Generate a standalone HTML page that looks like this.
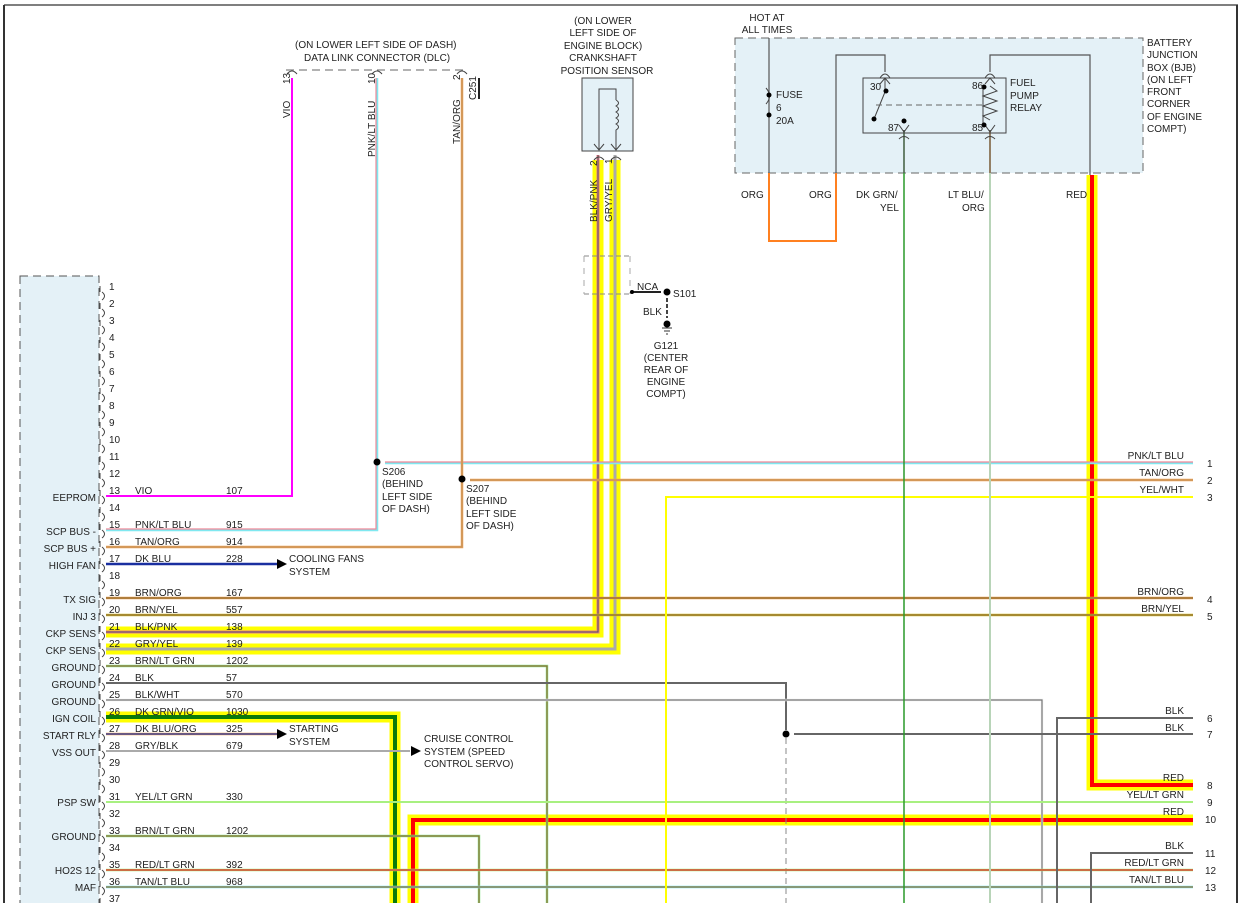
<!DOCTYPE html>
<html><head><meta charset="utf-8"><style>
html,body{margin:0;padding:0;background:#fff}
svg{display:block}
text{font-family:"Liberation Sans",Arial,sans-serif;font-size:10px;fill:#222}
</style></head><body>
<svg width="1242" height="903" viewBox="0 0 1242 903" xmlns="http://www.w3.org/2000/svg">
<rect x="0" y="0" width="1242" height="903" fill="#fff"/>
<line x1="4" y1="5" x2="1238" y2="5" stroke="#555" stroke-width="1.5"/>
<line x1="4" y1="5" x2="4" y2="903" stroke="#333" stroke-width="2"/>
<line x1="1237" y1="5" x2="1237" y2="903" stroke="#333" stroke-width="2"/>

<rect x="20" y="276" width="79" height="640" fill="#e4f1f7" stroke="#555" stroke-dasharray="8,5"/>
<rect x="735" y="38" width="408" height="135" fill="#e4f1f7" stroke="#666" stroke-dasharray="8,5"/>
<rect x="582" y="78" width="51" height="73" fill="#e4f1f7" stroke="#444"/>

<g fill="none" stroke-linejoin="miter">
<g stroke="#ffff00" stroke-width="11">
<path d="M106 632 H598 V160"/>
<path d="M106 649 H615 V160"/>
<path d="M106 717 H395 V903"/>
<path d="M413 903 V820 H1193"/>
<path d="M1092 175 V785 H1193"/>
</g>
<path d="M106 632 H598 V155" stroke="#e9798a" stroke-width="3"/>
<path d="M106 632 H598 V155" stroke="#555" stroke-width="1"/>
<path d="M106 649 H615 V155" stroke="#aaa" stroke-width="3"/>
<path d="M106 717 H395 V903" stroke="#0a7a0a" stroke-width="4"/>
<path d="M413 903 V820 H1193" stroke="#ff0000" stroke-width="4"/>
<path d="M1092 175 V785 H1193" stroke="#ff0000" stroke-width="4"/>

<path d="M106 496 H292 V78" stroke="#ff00ff" stroke-width="2"/>
<path d="M106 530 H377 V78" stroke="#7fe8f0" stroke-width="2.5"/>
<path d="M106 529 H376 V78" stroke="#f08898" stroke-width="1.2"/>
<path d="M385 463 H1193" stroke="#7fe8f0" stroke-width="2.5"/>
<path d="M385 462 H1193" stroke="#f08898" stroke-width="1.2"/>
<path d="M106 547 H462 V78" stroke="#f0a050" stroke-width="2.5"/>
<path d="M106 547 H462 V78" stroke="#b89060" stroke-width="1"/>
<path d="M470 480 H1193" stroke="#f0a050" stroke-width="2.5"/>
<path d="M470 480 H1193" stroke="#b89060" stroke-width="1"/>
<path d="M106 564 H278" stroke="#1a2fa0" stroke-width="2.5"/>
<path d="M106 598 H1193" stroke="#f0a050" stroke-width="2.5"/>
<path d="M106 598 H1193" stroke="#8a6a30" stroke-width="1.3"/>
<path d="M106 615 H1193" stroke="#d4c030" stroke-width="2.5"/>
<path d="M106 615 H1193" stroke="#8a6a30" stroke-width="1.3"/>
<path d="M106 666 H547 V903" stroke="#90e890" stroke-width="2.5"/>
<path d="M106 666 H547 V903" stroke="#8a6a30" stroke-width="1.2"/>
<path d="M106 683 H786 V730" stroke="#666" stroke-width="2"/>
<path d="M786 738 V903" stroke="#888" stroke-width="1" stroke-dasharray="6,4"/>
<path d="M106 700 H1042 V903" stroke="#f0f0f0" stroke-width="2.5"/>
<path d="M106 700 H1042 V903" stroke="#777" stroke-width="1.2"/>
<path d="M106 734 H278" stroke="#f0a050" stroke-width="2.5"/>
<path d="M106 734 H278" stroke="#1a2fa0" stroke-width="1.3"/>
<path d="M106 751 H410" stroke="#aaa" stroke-width="2"/>
<path d="M106 802 H1193" stroke="#a8f080" stroke-width="2"/>
<path d="M106 836 H479 V903" stroke="#90e890" stroke-width="2.5"/>
<path d="M106 836 H479 V903" stroke="#8a6a30" stroke-width="1.2"/>
<path d="M106 870 H1193" stroke="#a8f080" stroke-width="2.5"/>
<path d="M106 870 H1193" stroke="#e02020" stroke-width="1.2"/>
<path d="M106 887 H1193" stroke="#7fe8f0" stroke-width="2.5"/>
<path d="M106 887 H1193" stroke="#8a6a30" stroke-width="1.2"/>
<path d="M666 903 V497 H1193" stroke="#ffff00" stroke-width="2"/>
<path d="M1057 903 V718 H1193" stroke="#666" stroke-width="2"/>
<path d="M794 734 H1193" stroke="#666" stroke-width="2"/>
<path d="M1091 903 V853 H1193" stroke="#666" stroke-width="2"/>
<path d="M904 130 V903" stroke="#2a9a2a" stroke-width="1.5"/>
<path d="M990 130 V903" stroke="#f0c080" stroke-width="2"/>
<path d="M990 173 V903" stroke="#7fe8f0" stroke-width="1"/>
<path d="M769 173 V241 H836 V173" stroke="#ff8020" stroke-width="2"/>

<path d="M769 38 V173" stroke="#555" stroke-width="1.2"/>
<path d="M836 173 V55 H885 V72" stroke="#555" stroke-width="1.2"/>
<path d="M990 72 V55 H1090 V175" stroke="#555" stroke-width="1.2"/>
<path d="M990 130 V173 M904 130 V173" stroke="#555" stroke-width="1.2"/>
<rect x="863" y="78" width="143" height="55" stroke="#444" stroke-width="1"/>
<path d="M885 78 V92 L874 119" stroke="#444" stroke-width="1"/>
<path d="M876 105 H985" stroke="#666" stroke-dasharray="6,4"/>
<path d="M983 85 V126" stroke="#444"/>
<path d="M990 86 L997 91 L983 96 L997 101 L983 106 L997 111 L983 116 L990 120" stroke="#444"/>
<path d="M880 84 L885 78 L890 84 M899 125 L904 132 L909 125 M985 84 L990 78 L995 84 M985 125 L990 132 L995 125" stroke="#444"/>
<path d="M880 78 Q885 70 890 78 M985 78 Q990 70 995 78 M899 139 Q904 134 909 139 M985 139 Q990 134 995 139" stroke="#444"/>
<path d="M766 88 Q773 96 766 104" stroke="#444"/>

<path d="M599 150 V89 H616 V100" stroke="#444"/>
<path d="M616 100 q5 3 0 6 q5 3 0 6 q5 3 0 6 q5 3 0 6 q5 3 0 6 V150" stroke="#444"/>
<path d="M594 144 L599 150 L604 144 M611 144 L616 150 L621 144" stroke="#444"/>
<path d="M594 160 Q599 154 604 160 M611 160 Q616 154 621 160" stroke="#444"/>

<path d="M286 70 H468" stroke="#666" stroke-dasharray="8,5"/>
<path d="M287 74 Q292 68 297 74 M372 74 Q377 68 382 74 M457 74 Q462 68 467 74" stroke="#444"/>
<line x1="479" y1="78" x2="479" y2="99" stroke="#222" stroke-width="2"/>

<path d="M584 256 H630 M584 294 H630" stroke="#888" stroke-dasharray="5,3"/>
<path d="M584 256 V294 M630 256 V294" stroke="#aaa" stroke-dasharray="6,6"/>
<path d="M632 292 H661" stroke="#222" stroke-width="2"/>
<path d="M667 298 V318" stroke="#444" stroke-width="2" stroke-dasharray="4,2"/>
<path d="M662 328 H672 M664 331 H670 M666 334 H668" stroke="#333"/>
</g>

<g fill="#000">
<circle cx="377" cy="462" r="3.5"/><circle cx="462" cy="479" r="3.5"/>
<circle cx="786" cy="734" r="3.5"/><circle cx="667" cy="292" r="3.5"/>
<circle cx="667" cy="324" r="3.5"/><circle cx="632" cy="292" r="2"/>
<circle cx="769" cy="95" r="2.5"/><circle cx="769" cy="115" r="2.5"/>
<circle cx="886" cy="91" r="2.5"/><circle cx="874" cy="119" r="2.5"/>
<circle cx="904" cy="121" r="2.5"/><circle cx="984" cy="87" r="2.5"/><circle cx="984" cy="125" r="2.5"/>
<path d="M277 559 L287 564 L277 569 Z"/>
<path d="M277 729 L287 734 L277 739 Z"/>
<path d="M411 746 L421 751 L411 756 Z"/>
</g>

<g fill="none" stroke="#444" stroke-width="1">
<path d="M100 286 v6 M102 292 q5 4 0 8 M100 303 v6 M102 309 q5 4 0 8 M100 320 v6 M102 326 q5 4 0 8 M100 337 v6 M102 343 q5 4 0 8 M100 354 v6 M102 360 q5 4 0 8 M100 371 v6 M102 377 q5 4 0 8 M100 388 v6 M102 394 q5 4 0 8 M100 405 v6 M102 411 q5 4 0 8 M100 422 v6 M102 428 q5 4 0 8 M100 439 v6 M102 445 q5 4 0 8 M100 456 v6 M102 462 q5 4 0 8 M100 473 v6 M102 479 q5 4 0 8 M100 490 v6 M102 496 q5 4 0 8 M100 507 v6 M102 513 q5 4 0 8 M100 524 v6 M102 530 q5 4 0 8 M100 541 v6 M102 547 q5 4 0 8 M100 558 v6 M102 564 q5 4 0 8 M100 575 v6 M102 581 q5 4 0 8 M100 592 v6 M102 598 q5 4 0 8 M100 609 v6 M102 615 q5 4 0 8 M100 626 v6 M102 632 q5 4 0 8 M100 643 v6 M102 649 q5 4 0 8 M100 660 v6 M102 666 q5 4 0 8 M100 677 v6 M102 683 q5 4 0 8 M100 694 v6 M102 700 q5 4 0 8 M100 711 v6 M102 717 q5 4 0 8 M100 728 v6 M102 734 q5 4 0 8 M100 745 v6 M102 751 q5 4 0 8 M100 762 v6 M102 768 q5 4 0 8 M100 779 v6 M102 785 q5 4 0 8 M100 796 v6 M102 802 q5 4 0 8 M100 813 v6 M102 819 q5 4 0 8 M100 830 v6 M102 836 q5 4 0 8 M100 847 v6 M102 853 q5 4 0 8 M100 864 v6 M102 870 q5 4 0 8 M100 881 v6 M102 887 q5 4 0 8 M100 898 v6"/>
</g>
<g font-size="9.5">
<text x="109" y="290">1</text><text x="109" y="307">2</text><text x="109" y="324">3</text><text x="109" y="341">4</text><text x="109" y="358">5</text><text x="109" y="375">6</text><text x="109" y="392">7</text><text x="109" y="409">8</text><text x="109" y="426">9</text><text x="109" y="443">10</text><text x="109" y="460">11</text><text x="109" y="477">12</text><text x="109" y="494">13</text><text x="109" y="511">14</text><text x="109" y="528">15</text><text x="109" y="545">16</text><text x="109" y="562">17</text><text x="109" y="579">18</text><text x="109" y="596">19</text><text x="109" y="613">20</text><text x="109" y="630">21</text><text x="109" y="647">22</text><text x="109" y="664">23</text><text x="109" y="681">24</text><text x="109" y="698">25</text><text x="109" y="715">26</text><text x="109" y="732">27</text><text x="109" y="749">28</text><text x="109" y="766">29</text><text x="109" y="783">30</text><text x="109" y="800">31</text><text x="109" y="817">32</text><text x="109" y="834">33</text><text x="109" y="851">34</text><text x="109" y="868">35</text><text x="109" y="885">36</text><text x="109" y="902">37</text>
</g>
<g font-size="9.5">
<text x="135" y="494">VIO</text><text x="226" y="494">107</text>
<text x="135" y="528">PNK/LT BLU</text><text x="226" y="528">915</text>
<text x="135" y="545">TAN/ORG</text><text x="226" y="545">914</text>
<text x="135" y="562">DK BLU</text><text x="226" y="562">228</text>
<text x="135" y="596">BRN/ORG</text><text x="226" y="596">167</text>
<text x="135" y="613">BRN/YEL</text><text x="226" y="613">557</text>
<text x="135" y="630">BLK/PNK</text><text x="226" y="630">138</text>
<text x="135" y="647">GRY/YEL</text><text x="226" y="647">139</text>
<text x="135" y="664">BRN/LT GRN</text><text x="226" y="664">1202</text>
<text x="135" y="681">BLK</text><text x="226" y="681">57</text>
<text x="135" y="698">BLK/WHT</text><text x="226" y="698">570</text>
<text x="135" y="715">DK GRN/VIO</text><text x="226" y="715">1030</text>
<text x="135" y="732">DK BLU/ORG</text><text x="226" y="732">325</text>
<text x="135" y="749">GRY/BLK</text><text x="226" y="749">679</text>
<text x="135" y="800">YEL/LT GRN</text><text x="226" y="800">330</text>
<text x="135" y="834">BRN/LT GRN</text><text x="226" y="834">1202</text>
<text x="135" y="868">RED/LT GRN</text><text x="226" y="868">392</text>
<text x="135" y="885">TAN/LT BLU</text><text x="226" y="885">968</text>
</g>
<g font-size="9.5" text-anchor="end">
<text x="96" y="501">EEPROM</text><text x="96" y="535">SCP BUS -</text><text x="96" y="552">SCP BUS +</text><text x="96" y="569">HIGH FAN</text>
<text x="96" y="603">TX SIG</text><text x="96" y="620">INJ 3</text><text x="96" y="637">CKP SENS</text><text x="96" y="654">CKP SENS</text>
<text x="96" y="671">GROUND</text><text x="96" y="688">GROUND</text><text x="96" y="705">GROUND</text><text x="96" y="722">IGN COIL</text>
<text x="96" y="739">START RLY</text><text x="96" y="756">VSS OUT</text><text x="96" y="806">PSP SW</text><text x="96" y="840">GROUND</text>
<text x="96" y="874">HO2S 12</text><text x="96" y="891">MAF</text>
</g>
<g font-size="9.5" text-anchor="end">
<text x="1184" y="459">PNK/LT BLU</text><text x="1184" y="476">TAN/ORG</text><text x="1184" y="493">YEL/WHT</text>
<text x="1184" y="595">BRN/ORG</text><text x="1184" y="612">BRN/YEL</text><text x="1184" y="714">BLK</text><text x="1184" y="731">BLK</text>
<text x="1184" y="781">RED</text><text x="1184" y="798">YEL/LT GRN</text><text x="1184" y="815">RED</text>
<text x="1184" y="849">BLK</text><text x="1184" y="866">RED/LT GRN</text><text x="1184" y="883">TAN/LT BLU</text>
</g>
<g font-size="9.5">
<text x="1207" y="467">1</text><text x="1207" y="484">2</text><text x="1207" y="501">3</text><text x="1207" y="603">4</text><text x="1207" y="620">5</text>
<text x="1207" y="722">6</text><text x="1207" y="738">7</text><text x="1207" y="789">8</text><text x="1207" y="806">9</text><text x="1205" y="823">10</text>
<text x="1205" y="857">11</text><text x="1205" y="874">12</text><text x="1205" y="891">13</text>
</g>
<g font-size="9.5">
<text x="289" y="562">COOLING FANS</text><text x="289" y="575">SYSTEM</text>
<text x="289" y="732">STARTING</text><text x="289" y="745">SYSTEM</text>
<text x="424" y="742">CRUISE CONTROL</text><text x="424" y="755">SYSTEM (SPEED</text><text x="424" y="767">CONTROL SERVO)</text>
<text x="382" y="475">S206</text><text x="382" y="487">(BEHIND</text><text x="382" y="500">LEFT SIDE</text><text x="382" y="512">OF DASH)</text>
<text x="466" y="492">S207</text><text x="466" y="504">(BEHIND</text><text x="466" y="517">LEFT SIDE</text><text x="466" y="529">OF DASH)</text>
<text x="295" y="48">(ON LOWER LEFT SIDE OF DASH)</text>
<text x="304" y="61">DATA LINK CONNECTOR (DLC)</text>
<g text-anchor="middle">
<text x="603" y="24">(ON LOWER</text><text x="603" y="36">LEFT SIDE OF</text><text x="603" y="49">ENGINE BLOCK)</text><text x="603" y="61">CRANKSHAFT</text><text x="607" y="74">POSITION SENSOR</text>
<text x="767" y="21">HOT AT</text><text x="767" y="33">ALL TIMES</text>
<text x="666" y="349">G121</text><text x="666" y="361">(CENTER</text><text x="666" y="373">REAR OF</text><text x="666" y="385">ENGINE</text><text x="666" y="397">COMPT)</text>
</g>
<text x="637" y="290">NCA</text><text x="673" y="297">S101</text><text x="643" y="315">BLK</text>
<text x="776" y="98">FUSE</text><text x="776" y="111">6</text><text x="776" y="124">20A</text>
<text x="870" y="90">30</text><text x="888" y="131">87</text><text x="972" y="89">86</text><text x="972" y="131">85</text>
<text x="1010" y="86">FUEL</text><text x="1010" y="99">PUMP</text><text x="1010" y="111">RELAY</text>
<text x="1147" y="46">BATTERY</text><text x="1147" y="58">JUNCTION</text><text x="1147" y="71">BOX (BJB)</text><text x="1147" y="83">(ON LEFT</text><text x="1147" y="95">FRONT</text><text x="1147" y="107">CORNER</text><text x="1147" y="120">OF ENGINE</text><text x="1147" y="132">COMPT)</text>
<text x="741" y="198">ORG</text><text x="809" y="198">ORG</text>
<text x="856" y="198">DK GRN/</text><text x="880" y="211">YEL</text>
<text x="948" y="198">LT BLU/</text><text x="962" y="211">ORG</text>
<text x="1066" y="198">RED</text>
</g>
<g font-size="9.5">
<text transform="translate(290,118) rotate(-90)">VIO</text>
<text transform="translate(290,84) rotate(-90)">13</text>
<text transform="translate(375,157) rotate(-90)">PNK/LT BLU</text>
<text transform="translate(375,84) rotate(-90)">10</text>
<text transform="translate(460,144) rotate(-90)">TAN/ORG</text>
<text transform="translate(460,80) rotate(-90)">2</text>
<text transform="translate(476,100) rotate(-90)">C251</text>
<text transform="translate(597,222) rotate(-90)">BLK/PNK</text>
<text transform="translate(597,166) rotate(-90)">2</text>
<text transform="translate(612,222) rotate(-90)">GRY/YEL</text>
<text transform="translate(612,164) rotate(-90)">1</text>
</g>
</svg>
</body></html>
